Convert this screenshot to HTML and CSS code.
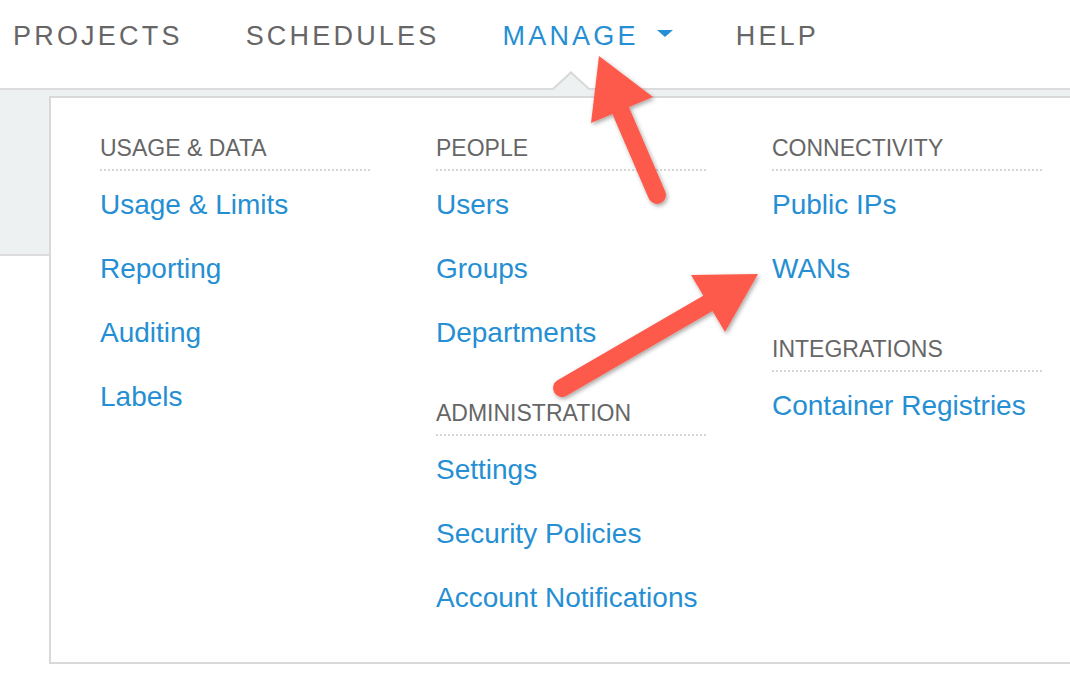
FILE: index.html
```html
<!DOCTYPE html>
<html lang="en">
<head>
<meta charset="utf-8">
<title>Manage menu</title>
<link rel="stylesheet" href="styles.css">
</head>
<body>
<header class="topnav">
  <nav class="nav-items">
    <a class="nav-item" href="#">PROJECTS</a>
    <a class="nav-item" href="#">SCHEDULES</a>
    <a class="nav-item active" href="#">MANAGE<span class="caret"></span></a>
    <a class="nav-item" href="#">HELP</a>
  </nav>
</header>
<div class="subbar"></div>

<div class="notch">
  <svg width="38" height="20" viewBox="0 0 38 20"><polygon points="0,19 19,0.5 38,19" fill="#eef1f2"/><polyline points="0.5,18.5 19,1.4 37.5,18.5" fill="none" stroke="#d9d9d9" stroke-width="2"/></svg>
</div>

<div class="dropdown">
  <div class="menu-col">
    <section class="menu-section">
      <h3 class="menu-head">USAGE &amp; DATA</h3>
      <ul class="menu-links">
        <li><a href="#">Usage &amp; Limits</a></li>
        <li><a href="#">Reporting</a></li>
        <li><a href="#">Auditing</a></li>
        <li><a href="#">Labels</a></li>
      </ul>
    </section>
  </div>
  <div class="menu-col">
    <section class="menu-section">
      <h3 class="menu-head">PEOPLE</h3>
      <ul class="menu-links">
        <li><a href="#">Users</a></li>
        <li><a href="#">Groups</a></li>
        <li><a href="#">Departments</a></li>
      </ul>
    </section>
    <section class="menu-section">
      <h3 class="menu-head">ADMINISTRATION</h3>
      <ul class="menu-links">
        <li><a href="#">Settings</a></li>
        <li><a href="#">Security Policies</a></li>
        <li><a href="#">Account Notifications</a></li>
      </ul>
    </section>
  </div>
  <div class="menu-col">
    <section class="menu-section">
      <h3 class="menu-head">CONNECTIVITY</h3>
      <ul class="menu-links">
        <li><a href="#">Public IPs</a></li>
        <li><a href="#">WANs</a></li>
      </ul>
    </section>
    <section class="menu-section">
      <h3 class="menu-head">INTEGRATIONS</h3>
      <ul class="menu-links">
        <li><a href="#">Container Registries</a></li>
      </ul>
    </section>
  </div>
</div>

<svg class="annotations" width="1070" height="682" viewBox="0 0 1070 682">
  <defs>
    <filter id="sh" x="-20%" y="-20%" width="140%" height="140%">
      <feDropShadow dx="1.5" dy="2" stdDeviation="2" flood-color="#000" flood-opacity="0.35"/>
    </filter>
  </defs>
  <g filter="url(#sh)" fill="#fd5a4b" stroke="#fd5a4b">
    <line x1="617" y1="102" x2="657" y2="195" stroke-width="18" stroke-linecap="round"/>
    <polygon points="599,56 653,97 591,123" stroke="none"/>
    <line x1="712" y1="301" x2="562" y2="388" stroke-width="18" stroke-linecap="round"/>
    <polygon points="758,274 691,275 725,332" stroke="none"/>
  </g>
</svg>
</body>
</html>
```

FILE: styles.css
```css
html, body {
  margin: 0;
  padding: 0;
  overflow: hidden;
}

body {
  width: 1070px;
  height: 682px;
  position: relative;
  background: #ffffff;
  font-family: "Liberation Sans", Arial, Helvetica, sans-serif;
}

.topnav {
  height: 88px;
  border-bottom: 2px solid #dcdcdc;
  background: #ffffff;
}

.nav-items {
  display: flex;
  gap: 63px;
  padding: 20px 0 0 13px;
}

.nav-item {
  font-size: 27px;
  line-height: 32px;
  letter-spacing: 3.2px;
  color: #666666;
  text-decoration: none;
  white-space: nowrap;
}

.nav-item.active {
  color: #268fd3;
}

.caret {
  display: inline-block;
  width: 0;
  height: 0;
  margin-left: 18px;
  margin-bottom: 8px;
  border-left: 8px solid transparent;
  border-right: 8px solid transparent;
  border-top: 7px solid #268fd3;
  vertical-align: baseline;
}

.subbar {
  height: 164px;
  background: #eef1f2;
  border-bottom: 2px solid #dcdcdc;
}

.notch {
  position: absolute;
  left: 552px;
  top: 71px;
  width: 38px;
  height: 20px;
  line-height: 0;
}

.dropdown {
  position: absolute;
  left: 49px;
  top: 96px;
  width: 1021px;
  height: 568px;
  box-sizing: border-box;
  border: 2px solid #d9d9d9;
  border-right: none;
  background: #ffffff;
  padding: 37px 0 0 49px;
  display: grid;
  grid-template-columns: repeat(3, 270px);
  column-gap: 66px;
  align-items: start;
}

.menu-section + .menu-section {
  margin-top: 35px;
}

.menu-head {
  margin: 0;
  font-size: 23px;
  line-height: 26px;
  font-weight: normal;
  color: #666666;
  padding-bottom: 8px;
  border-bottom: 2px dotted #d6d6d6;
  white-space: nowrap;
}

.menu-links {
  list-style: none;
  margin: 2px 0 0;
  padding: 0;
}

.menu-links li {
  font-size: 28px;
  line-height: 64px;
  white-space: nowrap;
}

.menu-links a {
  color: #268fd3;
  text-decoration: none;
}

.annotations {
  position: absolute;
  left: 0;
  top: 0;
  pointer-events: none;
}
```
